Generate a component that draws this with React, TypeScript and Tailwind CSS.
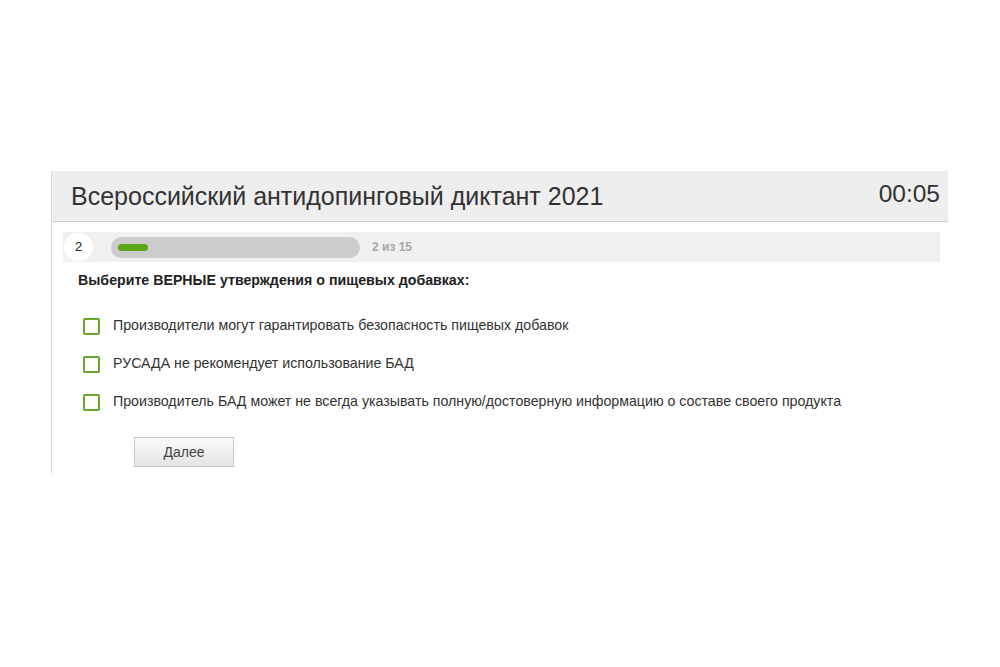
const options = [
  "Производители могут гарантировать безопасность пищевых добавок",
  "РУСАДА не рекомендует использование БАД",
  "Производитель БАД может не всегда указывать полную/достоверную информацию о составе своего продукта",
];

export default function App() {
  return (
    <div className="min-h-[667px] w-[1000px] bg-white font-['Liberation_Sans',Arial,sans-serif] text-[#333]">
      <div className="ml-[51px] w-[897px] pt-[171px]">
        <div className="border-l border-[#d6d6d6] pb-[6px]">
          {/* header */}
          <div className="flex h-[51px] items-center justify-between border-b border-[#cfcfcf] bg-[#eeeeee] pl-[19px] pr-[8px]">
            <h1 className="text-[25px] leading-none text-[#333]">Всероссийский антидопинговый диктант 2021</h1>
            <span className="-mt-[3px] text-[24.5px] leading-none text-[#333]">00:05</span>
          </div>

          {/* progress */}
          <div className="ml-[11px] mr-[8px] mt-[10px] flex h-[30px] items-center bg-[#f0f0f0]">
            <div className="ml-px flex h-[28px] w-[29px] items-center justify-center rounded-full bg-white text-[13px] text-[#222]">
              2
            </div>
            <div className="ml-[18px] flex h-[21px] w-[249px] items-center rounded-full bg-[#cccccc]">
              <div className="ml-[7px] h-[7px] w-[30px] rounded-full bg-[#5aa518]" />
            </div>
            <span className="ml-[12px] text-[12px] font-bold text-[#a8a8a8]">2 из 15</span>
          </div>

          {/* question */}
          <p className="ml-[26px] mt-[10px] text-[14.2px] font-bold leading-[16px] text-[#222]">
            Выберите ВЕРНЫЕ утверждения о пищевых добавках:
          </p>

          <div className="mt-[29px] flex flex-col gap-[20px] pl-[31px]">
            {options.map((o) => (
              <label key={o} className="flex h-[18px] items-center">
                <span className="h-[17px] w-[17px] rounded-[2px] border-[2.5px] border-[#6aa52d] bg-white" />
                <span className="ml-[13px] text-[14.2px] text-[#333]">{o}</span>
              </label>
            ))}
          </div>

          <button
            type="button"
            className="ml-[82px] mt-[26px] h-[30px] w-[100px] border border-[#c9c9c9] bg-gradient-to-b from-[#fbfbfb] to-[#e4e4e4] text-[14px] text-[#444]"
          >
            Далее
          </button>
        </div>
      </div>
    </div>
  );
}
